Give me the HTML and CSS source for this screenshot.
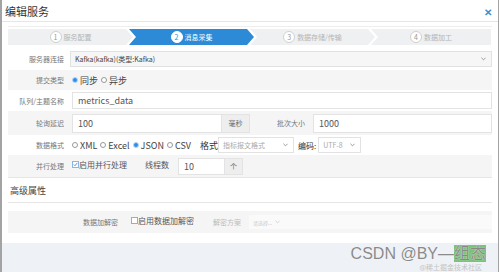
FILE: index.html
```html
<!DOCTYPE html>
<html lang="zh">
<head>
<meta charset="utf-8">
<title>编辑服务</title>
<link rel="stylesheet" href="styles.css">
</head>
<body>
<div class="dialog">
  <div class="hd">
    <span class="title">编辑服务</span>
    <span class="close">✕</span>
  </div>
  <div class="bd">
    <div class="steps">
      <div class="step first"><span class="num">1</span><span class="st">服务配置</span></div>
      <div class="step active"><span class="num">2</span><span class="st">消息采集</span></div>
      <div class="step"><span class="num">3</span><span class="st">数据存储/传输</span></div>
      <div class="step"><span class="num">4</span><span class="st">数据加工</span></div>
    </div>

    <div class="row h22">
      <div class="lbl">服务器连接</div>
      <div class="ctl">
        <div class="select wide"><span>Kafka(kafka)(类型:Kafka)</span><svg class="arr" viewBox="0 0 6 4" width="5" height="4"><path d="M0.5 0.5 L3 3 L5.5 0.5" fill="none" stroke="#888" stroke-width="1"/></svg></div>
      </div>
    </div>

    <div class="row gray h20">
      <div class="lbl">提交类型</div>
      <div class="ctl">
        <span class="radio on"></span><span class="rt">同步</span>
        <span class="radio"></span><span class="rt">异步</span>
      </div>
    </div>

    <div class="row h21">
      <div class="lbl">队列/主题名称</div>
      <div class="ctl">
        <div class="input full">metrics_data</div>
      </div>
    </div>

    <div class="row gray h24">
      <div class="lbl">轮询延迟</div>
      <div class="ctl">
        <div class="group g100"><div class="input grow">100</div><div class="addon a28">毫秒</div></div>
        <div class="lbl2">批次大小</div>
        <div class="input grow">1000</div>
      </div>
    </div>

    <div class="row h20">
      <div class="lbl">数据格式</div>
      <div class="ctl">
        <span class="radio"></span><span class="rt">XML</span>
        <span class="radio"></span><span class="rt">Excel</span>
        <span class="radio on"></span><span class="rt">JSON</span>
        <span class="radio"></span><span class="rt">CSV</span>
        <span class="fmt">格式</span>
        <div class="select fsel"><span class="ph">指标报文格式</span><svg class="arr" viewBox="0 0 6 4" width="5" height="4"><path d="M0.5 0.5 L3 3 L5.5 0.5" fill="none" stroke="#888" stroke-width="1"/></svg></div>
        <span class="enc">编码:</span>
        <div class="select esel"><span class="ph">UTF-8</span><svg class="arr" viewBox="0 0 6 4" width="5" height="4"><path d="M0.5 0.5 L3 3 L5.5 0.5" fill="none" stroke="#888" stroke-width="1"/></svg></div>
      </div>
    </div>

    <div class="row gray h23 bb">
      <div class="lbl">并行处理</div>
      <div class="ctl">
        <span class="cbox on"><svg viewBox="0 0 8 8" width="7" height="7"><path d="M1.2 4 L3.2 6 L6.8 1.5" fill="none" stroke="#2d7fd0" stroke-width="1.3"/></svg></span><span class="ct">启用并行处理</span>
        <span class="threads">线程数</span>
        <div class="group g65"><div class="input grow">10</div><div class="addon a18">个</div></div>
      </div>
    </div>

    <div class="section">高级属性</div>

    <div class="row gray adv">
      <div class="lbl lw">数据加解密</div>
      <div class="ctl">
        <span class="cbox"></span><span class="ct">启用数据加解密</span>
        <span class="scheme">解密方案</span>
        <div class="faded"><span>请选择...</span><svg class="arr" viewBox="0 0 6 4" width="5" height="4"><path d="M0.5 0.5 L3 3 L5.5 0.5" fill="none" stroke="#ccc" stroke-width="1"/></svg></div>
      </div>
    </div>
  </div>
  <div class="ft">
    <div class="wm">
      <div class="wm1">CSDN @BY—<span class="green">组态</span></div>
      <div class="wm2">@稀土掘金技术社区</div>
    </div>
  </div>
</div>
</body>
</html>
```

FILE: styles.css
```css
* { box-sizing: border-box; }
html, body { margin: 0; padding: 0; }
body {
  width: 499px;
  height: 272px;
  overflow: hidden;
  background: #fff;
  font-family: "Noto Sans CJK SC", "Noto Sans", sans-serif;
  color: #555;
}
.dialog {
  width: 499px;
  height: 272px;
  border-left: 2px solid #a3a3a3;
  border-right: 1px solid #a3a3a3;
  display: flex;
  flex-direction: column;
}
.hd {
  height: 22px;
  flex: none;
  border-bottom: 1px solid #e6e6e6;
  display: flex;
  align-items: center;
  justify-content: space-between;
  padding: 1px 6px 0 3px;
}
.title { font-size: 11px; color: #333; line-height: 1; }
.close { font-size: 10px; color: #3d8fd1; font-weight: bold; }
.bd { flex: 1; padding: 0 6px 0 6px; }

.steps {
  margin-top: 4px;
  border-top: 1px solid #eee;
  padding: 2px 0 3px;
  display: flex;
}
.step {
  height: 16px;
  width: 125px;
  margin-right: -4px;
  background: #eef0f1;
  clip-path: polygon(0 0, calc(100% - 7px) 0, 100% 50%, calc(100% - 7px) 100%, 0 100%, 7px 50%);
  display: flex;
  align-items: center;
  justify-content: center;
  font-size: 7px;
  color: #b5b5b5;
}
.step.first { clip-path: polygon(0 0, calc(100% - 7px) 0, 100% 50%, calc(100% - 7px) 100%, 0 100%); }
.step:last-child { width: 120px; clip-path: polygon(0 0, 100% 0, 100% 100%, 0 100%, 7px 50%); }
.step.active { background: #2c8ad6; color: #fff; }
.num {
  width: 12px; height: 12px;
  border-radius: 50%;
  border: 1.5px solid #cfcfcf;
  background: #fff;
  color: #999;
  font-size: 7px;
  display: flex; align-items: center; justify-content: center;
  margin-right: 2px;
  line-height: 1;
}
.step.active .num { border-color: #fff; color: #2c8ad6; }

.row { display: flex; align-items: center; }
.gray { background: #f5f5f5; }
.h20 { height: 20px; }
.h21 { height: 21px; }
.h22 { height: 22px; }
.h23 { height: 23px; }
.h24 { height: 24px; }
.bb { border-bottom: 1px solid #e6e6e6; }
.lbl {
  width: 56px;
  flex: none;
  text-align: right;
  font-size: 7px;
  color: #777;
  white-space: nowrap;
}
.ctl { flex: 1; display: flex; align-items: center; padding-left: 8px; }

.select {
  height: 16px;
  border: 1px solid #e2e2e2;
  background: #f6f6f6;
  display: flex;
  align-items: center;
  justify-content: space-between;
  padding: 0 5px 0 4px;
  font-size: 7px;
  color: #444;
}
.select.wide { flex: 1; margin-left: -2px; }
.arr { flex: none; }
.input {
  height: 17px;
  border: 1px solid #e3e3e3;
  background: #fff;
  display: flex;
  align-items: center;
  padding: 0 5px;
  font-size: 9px;
  color: #555;
}
.input.full { flex: 1; height: 17px; }
.grow { flex: 1; }
.group { display: flex; }
.g100 { width: 178px; height: 19px; }
.g100 .input, .g100 .addon { height: 19px; }
.addon {
  height: 17px;
  background: #eeeeee;
  border: 1px solid #e3e3e3;
  border-left: none;
  display: flex; align-items: center; justify-content: center;
  font-size: 7px; color: #666;
}
.a28 { width: 28px; }
.a18 { width: 18px; }
.lbl2 { width: 63px; text-align: right; padding-right: 8px; font-size: 7px; color: #777; flex: none; }
.row.h24 .input.grow { height: 19px; }

.radio {
  width: 6px; height: 6px;
  border-radius: 50%;
  border: 1px solid #999;
  background: #fff;
  flex: none;
  margin-right: 2px;
}
.radio.on { background: #2d8cf0; border: 1px solid #b8d7f5; width: 6px; height: 6px; }
.rt { font-size: 9px; color: #444; margin-right: 3px; }
.fmt { font-size: 9px; color: #333; margin-left: 6px; }
.fsel { width: 76px; background: #fff; }
.ph { color: #aaa; }
.enc { font-size: 8px; color: #333; margin: 0 2px 0 4px; }
.esel { width: 43px; background: #fff; }

.cbox {
  width: 7px; height: 7px;
  border: 1px solid #aaa;
  background: #fff;
  flex: none;
  display: flex; align-items: center; justify-content: center;
  margin-bottom: 3px;
}
.cbox.on { border-color: #8bb6df; }
.ct { font-size: 8px; color: #555; margin-bottom: 3px; }
.threads { font-size: 8px; color: #555; margin-left: 18px; margin-right: 9px; margin-bottom: 3px; }
.g65 { width: 65px; height: 17px; }

.section {
  height: 25px;
  border-bottom: 1px solid #e6e6e6;
  display: flex; align-items: flex-end;
  padding: 0 0 5px 2px;
  font-size: 9px; color: #444;
  margin-bottom: 8px;
}
.adv { height: 22px; }
.lbl.lw { width: 110px; }
.adv .ctl { padding-left: 13px; }
.scheme { font-size: 7px; color: #bbb; margin-left: 19px; }
.faded {
  margin-left: 8px;
  flex: 1;
  align-self: stretch;
  background: #fafafa;
  display: flex; align-items: center;
  font-size: 5px; color: #ccc;
  padding-left: 4px;
}
.faded span { margin-right: 3px; }

.ft {
  height: 29px;
  flex: none;
  background: #eef1f6;
  display: flex;
  justify-content: flex-end;
  align-items: flex-start;
  padding-right: 12px;
}
.wm { margin-top: 2px; text-align: right; }
.wm1 {
  font-family: "Liberation Sans", "Noto Sans CJK SC", sans-serif;
  font-size: 16px;
  color: #8a8a8a;
  line-height: 18px;
  text-shadow: 0 0 1px #fff;
}
.green { background: #7cc27a; color: #888; }
.wm2 { font-size: 7px; color: #c4c4c4; line-height: 8px; margin-right: 4px; }
```
